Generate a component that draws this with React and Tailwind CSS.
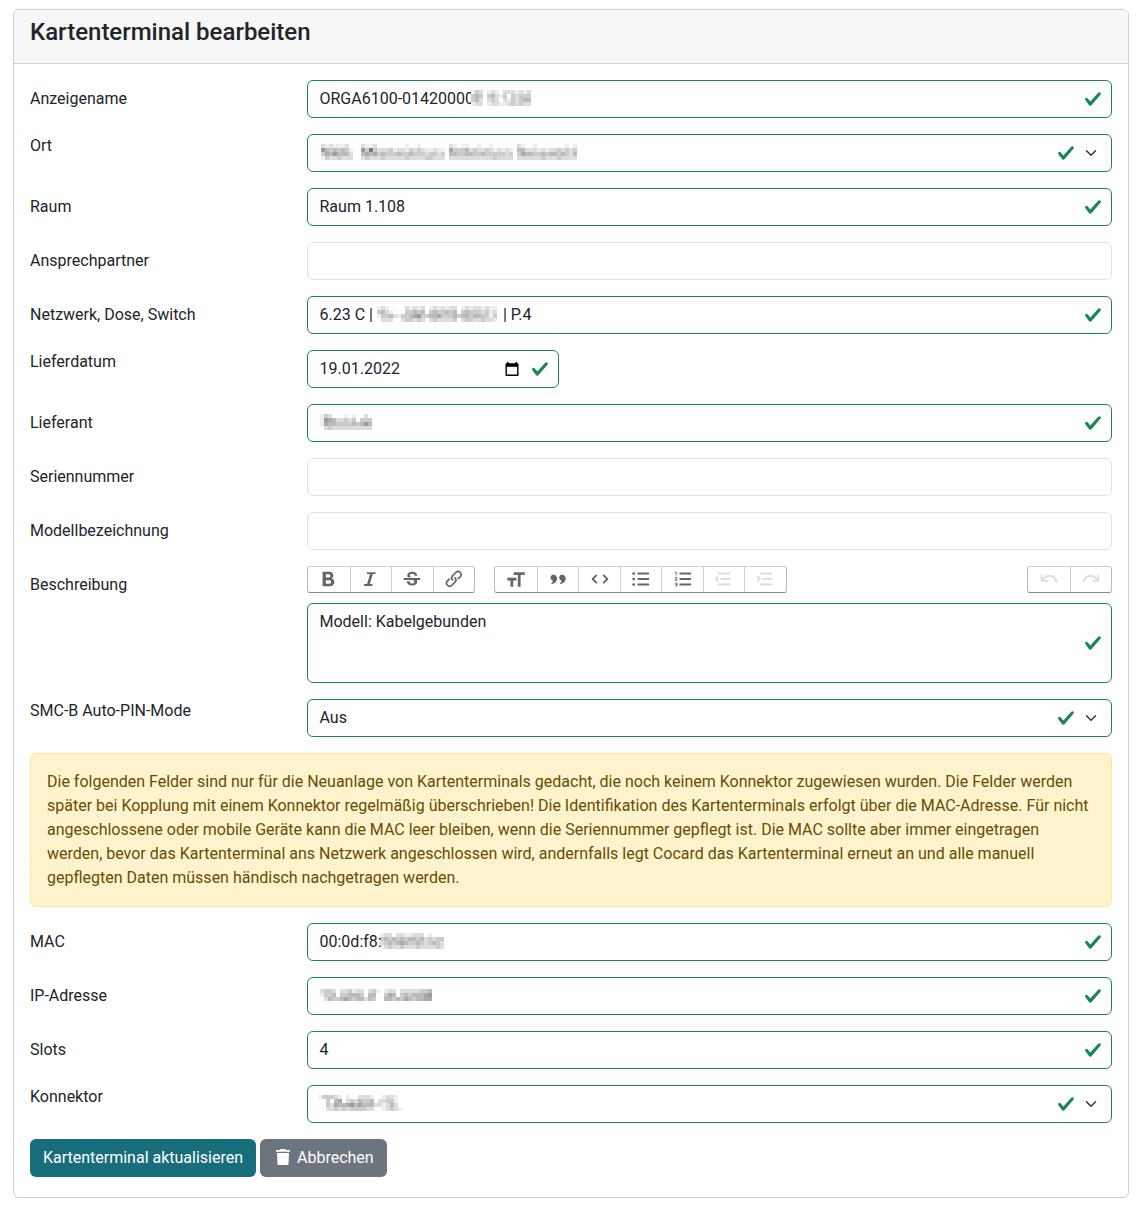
import React from "react";

const CHECK =
  "M2.3 6.73.6 4.53c-.4-1.04.46-1.4 1.1-.8l1.1 1.4 3.4-3.8c.6-.63 1.6-.27 1.2.7l-4 4.6c-.43.5-.8.4-1.1.1z";

function Check() {
  return (
    <svg className="size-[18px] shrink-0" viewBox="0 0 8 8" fill="#198754">
      <path d={CHECK} />
    </svg>
  );
}

function Chevron() {
  return (
    <svg className="h-3 w-4 shrink-0" viewBox="0 0 16 16" fill="none" stroke="#343a40" strokeWidth="2" strokeLinecap="round" strokeLinejoin="round">
      <path d="m2 5 6 6 6-6" />
    </svg>
  );
}

function Calendar() {
  return (
    <svg className="mr-[12px] h-[16px] w-[14px] shrink-0" viewBox="0 0 14 16">
      <path fill="#000" fillRule="evenodd" d="M2 1h1.6v1.2h6.8V1H12v1.2h.5c.6 0 1 .4 1 1V14c0 .6-.4 1-1 1h-11c-.6 0-1-.4-1-1V3.2c0-.6.4-1 1-1H2zM1.9 5.8v7.8h10.2V5.8z" />
    </svg>
  );
}

// Greyed-out values: each digit is the darkness of one 4px cell (0 = white, 9 = darkest).
const HIDDEN = {
  name: ["132012102221212", "343034213032333", "342023202132344", "122012211232322"],
  place: [
    "02121112000211200000001001000000021011001001000000210010000000101",
    "06434343100638322231221323211211053334232232121210442221212232323",
    "03546444200454534333433433323323044334433433333230354433434434324",
    "01322322200232223222223222233222022222222222322220222222322232222",
  ],
  socket: ["121000021212012121220121221211", "342100033434034334340343332312", "133421334563344533343443443313", "022200233232023222230233223221"],
  supplier: ["1320001010020", "1654223230333", "1544333343464", "0232222222222"],
  mac: ["1220221122201000", "3434343443423233", "2343454334323432", "1232232223222232"],
  ip: ["2332022312202310122022222334", "1334033444304400354034344456", "0243345434424300443435434455"],
  connector: ["133321010022210012210", "003045023243340223310", "003254456454442212420", "002232323333220012321"],
};

function Mosaic({ id, className = "" }) {
  const rows = HIDDEN[id];
  const w = rows[0].length * 4;
  const h = rows.length * 4;
  return (
    <svg className={`mb-px shrink-0 ${className}`} width={w} height={h} viewBox={`0 0 ${w} ${h}`} shapeRendering="crispEdges">
      {rows.map((row, y) =>
        [...row].map((c, x) => (
          <rect key={`${x}-${y}`} x={x * 4} y={y * 4} width="4" height="4" fill="#303030" opacity={Number(c) * 0.082} />
        ))
      )}
    </svg>
  );
}

function Row({ label, top, children }) {
  return (
    <div className="mb-4 flex">
      <div className={`w-[277px] shrink-0 ${top ? "" : "pt-[7px]"}`}>{label}</div>
      <div className="min-w-0 flex-1">{children}</div>
    </div>
  );
}

function Field({ children, select, date }) {
  return (
    <div className={`flex h-[38px] items-center rounded-md border border-[#198754] pl-[11.5px] ${select ? "pr-3" : "pr-[9px]"} ${date ? "w-[252px]" : "w-full"}`}>
      <div className="flex h-6 flex-1 items-center whitespace-pre pb-px">{children}</div>
      {date && <Calendar />}
      <Check />
      {select && <div className="ml-2 flex"><Chevron /></div>}
    </div>
  );
}

function Empty() {
  return <div className="h-[38px] rounded-md border border-[#dee2e6]" />;
}

const LINES = "M8 6a1 1 0 0 1 1-1h11a1 1 0 1 1 0 2H9a1 1 0 0 1-1-1zm1 5a1 1 0 1 0 0 2h11a1 1 0 1 0 0-2H9zm0 6a1 1 0 1 0 0 2h11a1 1 0 1 0 0-2H9z";
const SHORT_LINES = "M5 6a1 1 0 0 1 1-1h12a1 1 0 1 1 0 2H6a1 1 0 0 1-1-1zm4 5a1 1 0 1 0 0 2h9a1 1 0 1 0 0-2H9zm-3 6a1 1 0 1 0 0 2h12a1 1 0 1 0 0-2H6z";
const UNDO =
  "M3 14a1 1 0 0 0 1 1h6a1 1 0 1 0 0-2H6.257c2.247-2.764 5.151-3.668 7.579-3.264 2.589.432 4.739 2.356 5.174 5.405a1 1 0 0 0 1.98-.283c-.564-3.95-3.415-6.526-6.825-7.095C11.084 7.25 7.63 8.377 5 11.39V8a1 1 0 0 0-2 0v6z";

const ICONS = {
  bold: <path fillRule="evenodd" d="M15 11.4c1-.7 1.700-1.800 1.700-2.900A4.500 4.500 0 0 0 12.200 4H5v16h8.300a4.600 4.600 0 0 0 4.500-4.700c0-1.800-1.100-3.200-2.800-3.900zM8.500 6.800h3.300a1.800 1.800 0 0 1 0 3.600H8.500zm4 10.400h-4v-3.900h4a1.950 1.950 0 0 1 0 3.900z" />,
  italic: <path d="M7.500 4.500H17v2h-3l-3.300 11h2.800v2H4.500v-2h3.200L11 6.500H7.500z" />,
  strike: <path d="M6.85 8.08C6.85 5.37 9.45 4 12.24 4c1.64 0 3 .49 3.9 1.28.77.65 1.46 1.73 1.46 3.24h-2.6c0-.31-.05-.59-.15-.85-.29-.86-1.4-1.48-2.65-1.48-1.86 0-2.74 1.02-2.74 1.9 0 .48.25.88.74 1.21.38.25.77.48 1.41.7H7.39c-.21-.34-.54-.89-.54-1.92zM21 13v-2H3v2h9.62c1.15.45 1.96.75 1.96 1.97 0 1.2-.81 1.97-2.28 1.97-1.54 0-2.93-.64-2.93-2.51H6.4c0 .55.08 1.13.24 1.58.81 2.29 3.29 3 5.67 3 2.27 0 5.3-.89 5.3-4.05 0-.3-.01-1.16-.48-1.96H21z" />,
  link: <path d="M9.88 13.7a4.3 4.3 0 0 1 0-6.07l3.37-3.37a4.26 4.26 0 0 1 6.07 0 4.3 4.3 0 0 1 0 6.06l-1.96 1.72a.91.91 0 1 1-1.3-1.3l1.97-1.71a2.46 2.46 0 0 0-3.48-3.48l-3.38 3.37a2.46 2.46 0 0 0 0 3.48.91.91 0 1 1-1.3 1.3zM4.25 19.46a4.3 4.3 0 0 1 0-6.07l1.93-1.9a.91.91 0 1 1 1.3 1.3l-1.93 1.9a2.46 2.46 0 0 0 3.48 3.48l3.37-3.38c.96-.96.96-2.52 0-3.48a.91.91 0 1 1 1.3-1.3 4.3 4.3 0 0 1 0 6.07l-3.38 3.38a4.26 4.26 0 0 1-6.07 0z" />,
  heading: <path d="M21.5 7.5v-3h-12v3H14v13h3v-13h4.5zM9 13.5h3.5v-3h-10v3H6v7h3v-7z" />,
  quote: <path d="M4.581 8.471c.44-.5 1.056-.834 1.758-.995C8.074 7.17 9.201 7.822 10 8.752c1.354 1.578 1.33 3.555.394 5.277-.941 1.731-2.788 3.163-4.988 3.56a.622.622 0 0 1-.653-.317c-.113-.205-.121-.49.16-.764.294-.286.567-.566.791-.835.222-.266.413-.54.524-.815.113-.28.156-.597.026-.908-.128-.303-.39-.524-.72-.69a3.02 3.02 0 0 1-1.674-2.7c0-.905.283-1.59.72-2.088zm9.419 0c.44-.5 1.055-.834 1.758-.995 1.734-.306 2.862.346 3.66 1.276 1.355 1.578 1.33 3.555.395 5.277-.941 1.731-2.789 3.163-4.988 3.56a.622.622 0 0 1-.653-.317c-.113-.205-.122-.49.16-.764.294-.286.567-.566.791-.835.222-.266.412-.54.523-.815.114-.28.157-.597.026-.908-.127-.303-.39-.524-.72-.69a3.02 3.02 0 0 1-1.672-2.701c0-.905.283-1.59.72-2.088z" />,
  code: <path d="M3.293 11.293a1 1 0 0 0 0 1.414l4 4a1 1 0 1 0 1.414-1.414L5.414 12l3.293-3.293a1 1 0 0 0-1.414-1.414l-4 4zm13.414 5.414 4-4a1 1 0 0 0 0-1.414l-4-4a1 1 0 1 0-1.414 1.414L18.586 12l-3.293 3.293a1 1 0 0 0 1.414 1.414z" />,
  bullets: (
    <>
      <path d={LINES} />
      <circle cx="4" cy="6" r="1.5" />
      <circle cx="4" cy="12" r="1.5" />
      <circle cx="4" cy="18" r="1.5" />
    </>
  ),
  numbers: (
    <>
      <path d={LINES} />
      <path d="M3 4h2v4H4V5H3zM3 10h3v1l-1.5 2H6v1H3v-1l1.667-2H3zM3 17v-1h3v4H3v-1h2v-.5H4v-1h1V17z" />
    </>
  ),
  outdent: <path d={SHORT_LINES + "M2.293 11.293a1 1 0 0 0 0 1.414l2 2a1 1 0 1 0 1.414-1.414L4.414 12l1.293-1.293a1 1 0 0 0-1.414-1.414l-2 2z"} />,
  indent: <path d={SHORT_LINES + "M3.707 14.707l2-2a1 1 0 0 0 0-1.414l-2-2a1 1 0 1 0-1.414 1.414L3.586 12l-1.293 1.293a1 1 0 1 0 1.414 1.414z"} />,
  undo: <path d={UNDO} />,
  redo: <path d={UNDO} transform="translate(24 0) scale(-1 1)" />,
};

const DISABLED = ["outdent", "indent", "undo", "redo"];

function Tools({ names }) {
  return (
    <div className="flex h-[27px] rounded-[3px] border border-[#bbb] border-t-[#ccc] border-b-[#888]">
      {names.map((n, i) => (
        <button key={n} aria-label={n} className={`flex w-[41.5px] items-start justify-center pt-px ${i ? "border-l border-[#ccc]" : ""}`}>
          <svg viewBox="0 0 24 24" className={`size-[22px] ${DISABLED.includes(n) ? "opacity-[0.13]" : "opacity-60"}`} fill="#000">
            {ICONS[n]}
          </svg>
        </button>
      ))}
    </div>
  );
}

export default function App() {
  return (
    <div className="h-[1209px] bg-white pl-[13px] pt-[9px] font-[Roboto,sans-serif] text-base text-[#212529]">
      <div className="h-[1189px] w-[1116px] overflow-hidden rounded-md border border-[#cfcfcf]">
        <div className="h-[54px] border-b border-[#cfcfcf] bg-[#f7f7f7] px-4 pt-2">
          <h4 className="text-2xl leading-[28.8px] font-medium">Kartenterminal bearbeiten</h4>
        </div>
        <div className="p-4">
          <Row label="Anzeigename">
            <Field>ORGA6100-01420000<Mosaic id="name" className="-ml-[3px] bg-white" /></Field>
          </Row>
          <Row label="Ort" top>
            <Field select><Mosaic id="place" className="-ml-[2.5px]" /></Field>
          </Row>
          <Row label="Raum"><Field>Raum 1.108</Field></Row>
          <Row label="Ansprechpartner"><Empty /></Row>
          <Row label="Netzwerk, Dose, Switch">
            <Field>6.23 C | <Mosaic id="socket" className="mr-0.5" /> | P.4</Field>
          </Row>
          <Row label="Lieferdatum" top><Field date>19.01.2022</Field></Row>
          <Row label="Lieferant"><Field><Mosaic id="supplier" /></Field></Row>
          <Row label="Seriennummer"><Empty /></Row>
          <Row label="Modellbezeichnung"><Empty /></Row>
          <Row label="Beschreibung">
            <div className="mb-2.5 flex">
              <Tools names={["bold", "italic", "strike", "link"]} />
              <div className="w-[19.3px]" />
              <Tools names={["heading", "quote", "code", "bullets", "numbers", "outdent", "indent"]} />
              <div className="flex-1" />
              <Tools names={["undo", "redo"]} />
            </div>
            <div className="flex h-20 items-center rounded-md border border-[#198754] pr-[9px] pl-[11.5px]">
              <div className="flex-1 self-start pt-1.5">Modell: Kabelgebunden</div>
              <Check />
            </div>
          </Row>
          <Row label="SMC-B Auto-PIN-Mode" top><Field select>Aus</Field></Row>
          <div className="mb-4 rounded-md border border-[#ffe69c] bg-[#fff3cd] p-4 text-[#664d03]">
            Die folgenden Felder sind nur für die Neuanlage von Kartenterminals gedacht, die noch keinem Konnektor zugewiesen wurden. Die Felder werden später bei Kopplung mit einem Konnektor regelmäßig überschrieben! Die Identifikation des Kartenterminals erfolgt über die MAC-Adresse. Für nicht angeschlossene oder mobile Geräte kann die MAC leer bleiben, wenn die Seriennummer gepflegt ist. Die MAC sollte aber immer eingetragen werden, bevor das Kartenterminal ans Netzwerk angeschlossen wird, andernfalls legt Cocard das Kartenterminal erneut an und alle manuell gepflegten Daten müssen händisch nachgetragen werden.
          </div>
          <Row label="MAC"><Field>00:0d:f8:<Mosaic id="mac" className="-ml-0.5" /></Field></Row>
          <Row label="IP-Adresse"><Field><Mosaic id="ip" /></Field></Row>
          <Row label="Slots"><Field>4</Field></Row>
          <Row label="Konnektor" top><Field select><Mosaic id="connector" className="-ml-0.5" /></Field></Row>
          <div className="flex gap-1 text-white">
            <button className="h-[38px] w-[226px] rounded-md bg-[#176d7a] pb-px">Kartenterminal aktualisieren</button>
            <button className="flex h-[38px] w-[127px] items-center rounded-md bg-[#6c757d] pb-px pl-4">
              <svg className="mr-[7px] mb-px h-4 w-3.5" viewBox="0 0 14 16" fill="currentColor">
                <path d="M4.5 0h5l.8 1H14v1.800H0V1h3.700zM1 4h12l-.5 11c0 .6-.4 1-1 1h-9c-.6 0-1-.4-1-1z" />
              </svg>
              Abbrechen
            </button>
          </div>
        </div>
      </div>
    </div>
  );
}
